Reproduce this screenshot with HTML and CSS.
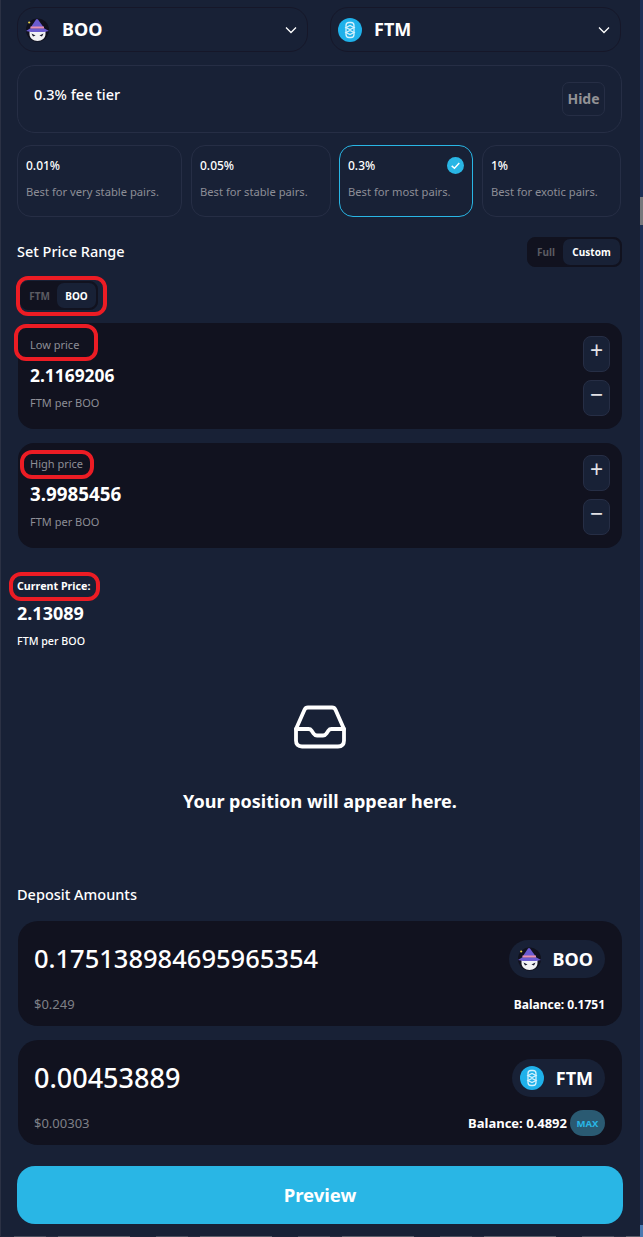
FILE: index.html
```html
<!DOCTYPE html>
<html lang="en">
<head>
<meta charset="utf-8">
<title>Add liquidity</title>
<link rel="stylesheet" href="styles.css">
</head>
<body>
<main class="page">
  <div class="pair">
    <button class="select select-a">
      <svg class="coin" viewBox="0 0 24 24"><use href="#boo"/></svg>
      <span class="select-name">BOO</span>
      <svg class="chev" viewBox="0 0 12 8"><path d="M1 1.500 6 6.500 11 1.500"/></svg>
    </button>
    <button class="select select-b">
      <svg class="coin" viewBox="0 0 24 24"><use href="#ftm"/></svg>
      <span class="select-name">FTM</span>
      <svg class="chev" viewBox="0 0 12 8"><path d="M1 1.500 6 6.500 11 1.500"/></svg>
    </button>
  </div>

  <section class="fee">
    <span class="fee-title">0.3% fee tier</span>
    <button class="hide">Hide</button>
  </section>

  <div class="tiers">
    <div class="tier t1"><b>0.01%</b><span>Best for very stable pairs.</span></div>
    <div class="tier t2"><b>0.05%</b><span>Best for stable pairs.</span></div>
    <div class="tier t3 on"><b>0.3%</b><span>Best for most pairs.</span>
      <svg class="tick" viewBox="0 0 18 18"><circle cx="9" cy="9" r="9"/><path d="M5 9.400 7.900 12 13 6.300"/></svg>
    </div>
    <div class="tier t4"><b>1%</b><span>Best for exotic pairs.</span></div>
  </div>

  <div class="range-head">
    <h2 class="head">Set Price Range</h2>
    <div class="seg seg-range"><span class="seg-off">Full</span><span class="seg-on">Custom</span></div>
  </div>

  <div class="seg seg-token mark mark-token"><span class="seg-off">FTM</span><span class="seg-on">BOO</span></div>

  <section class="price price-low">
    <div class="price-body">
      <span class="price-label mark mark-low">Low price</span>
      <span class="price-value">2.1169206</span>
      <span class="price-unit">FTM per BOO</span>
    </div>
    <div class="steps"><button class="step">+</button><button class="step">−</button></div>
  </section>

  <section class="price price-high">
    <div class="price-body">
      <span class="price-label mark mark-high">High price</span>
      <span class="price-value">3.9985456</span>
      <span class="price-unit">FTM per BOO</span>
    </div>
    <div class="steps"><button class="step">+</button><button class="step">−</button></div>
  </section>

  <div class="current">
    <span class="current-label mark mark-current">Current Price:</span>
    <span class="current-value">2.13089</span>
    <span class="current-unit">FTM per BOO</span>
  </div>

  <div class="empty">
    <svg class="tray" viewBox="0 0 52 44"><path d="M2 24 10.500 4.800Q11.500 2.500 14 2.500H38Q40.500 2.500 41.500 4.800L50 24V35.500Q50 41.500 44 41.500H8Q2 41.500 2 35.500Z"/><path d="M2 24H14.500Q16.500 24 17.500 25.500L19.500 28.500Q20.800 30.500 23 30.500H29Q31.200 30.500 32.500 28.500L34.500 25.500Q35.500 24 37.500 24H50"/></svg>
    <p class="empty-text">Your position will appear here.</p>
  </div>

  <h2 class="head deposit-head">Deposit Amounts</h2>

  <section class="amount">
    <div class="amount-row">
      <span class="amount-value">0.175138984695965354</span>
      <span class="token token-boo"><svg class="coin" viewBox="0 0 24 24"><use href="#boo"/></svg>BOO</span>
    </div>
    <div class="amount-foot">
      <span class="usd">$0.249</span>
      <span class="balance">Balance: 0.1751</span>
    </div>
  </section>

  <section class="amount amount-2">
    <div class="amount-row">
      <span class="amount-value">0.00453889</span>
      <span class="token"><svg class="coin" viewBox="0 0 24 24"><use href="#ftm"/></svg>FTM</span>
    </div>
    <div class="amount-foot">
      <span class="usd">$0.00303</span>
      <span class="balance">Balance: 0.4892<span class="max">MAX</span></span>
    </div>
  </section>

  <button class="preview">Preview</button>
</main>

<svg class="defs" width="0" height="0" aria-hidden="true">
  <defs>
    <symbol id="boo" viewBox="0 0 24 24">
      <circle cx="11.500" cy="12" r="11.500" fill="#10111d"/>
      <path d="M3.500 13H19.500V16C19.500 20 16 23 11.500 23S3.500 20 3.500 16Z" fill="#f1f1f4"/>
      <path d="M5.500 15.500 9.500 17.500 7 18.500ZM17.500 15.500 13.500 17.500 16 18.500Z" fill="#15162a"/>
      <path d="M4 10.500 10 1.500Q11 .5 12 1.500L18.500 10.500Z" fill="#6a5bd0"/>
      <path d="M0 13 4 10.500H18.500L23 13 18 14H5Z" fill="#6a5bd0"/>
      <rect x="4.500" y="8.500" width="13.500" height="2" fill="#e88fb0"/>
      <circle cx="3.200" cy="4.500" r="1.100" fill="#e8d24a"/>
    </symbol>
    <symbol id="ftm" viewBox="0 0 24 24">
      <circle cx="12" cy="12" r="12" fill="#1fb1ea"/>
      <g fill="none" stroke="#d5f2fd" stroke-width="1.300">
        <rect x="8" y="4.500" width="8" height="15" rx="3"/>
        <path d="M8 9.500 12 7.500 16 9.500 12 11.500ZM8 14.500 12 12.500 16 14.500 12 16.500Z"/>
      </g>
    </symbol>
  </defs>
</svg>
</body>
</html>
```
FILE: styles.css
```css
* { box-sizing: border-box; }
html, body { margin: 0; padding: 0; }
body {
  position: relative;
  background: #182136;
  color: #fff;
  font-family: "Noto Sans", "Open Sans", sans-serif;
  height: 1237px;
  overflow: hidden;
}
/* window edges captured in the screenshot: left hairline, bottom strip */
body::before {
  content: ""; position: absolute; left: 0; top: 0; bottom: 0; width: 1px;
  background: #2b3144;
}
body::after {
  content: ""; position: absolute; left: 0; right: 0; bottom: 0; height: 1px;
  background: repeating-linear-gradient(90deg, #20263a 0 14px, #4b4f5e 14px 46px, #2a2f42 46px 58px, #5c5f6b 58px 130px, #20263a 130px 142px);
}
html::after {
  content: ""; position: absolute; right: 0; top: 0; width: 3px; height: 1237px;
  background: linear-gradient(#1c2f55 0 197px, #77787c 197px 225px, #1c2f55 225px 1225px, #4a78b0 1225px);
}
button { font: inherit; color: inherit; background: none; border: 0; padding: 0; }
h2, p { margin: 0; }
.defs { position: absolute; }
.page { padding: 7px 21px 0 17px; display: flex; flex-direction: column; }

.pair { display: flex; gap: 22px; width: 605px; }
.select {
  height: 45px; width: 291px; display: flex; align-items: center;
  border: 1px solid #161729; border-radius: 18px;
  padding: 0 10px 0 7px;
}
.select-a { padding-left: 8px; }
.select .coin { width: 24px; height: 24px; flex: none; }
.select-name { margin-left: 12px; padding-bottom: 2px; font-size: 18px; font-weight: 700; flex: 1; text-align: left; line-height: 1; }
.chev { width: 12px; height: 8px; margin-top: 1px; fill: none; stroke: #fff; stroke-width: 1.300; }

.fee {
  margin-top: 13px; height: 68px; width: 605px;
  border: 1px solid #262e45; border-radius: 18px;
  padding: 16px 16px 0 16px;
  display: flex; justify-content: space-between; align-items: flex-start;
}
.fee-title { font-size: 14.500px; font-weight: 500; line-height: 24px; }
.hide {
  width: 43px; height: 34px; padding-bottom: 1px;
  border: 1px solid #262e45; border-radius: 7px;
  font-size: 14px; font-weight: 700; color: #929295;
}

.tiers { display: flex; gap: 9px; margin-top: 12px; width: 605px; }
.tier {
  position: relative; height: 72px; padding: 11px 8px 0 8px;
  border: 1px solid #262e45; border-radius: 14px;
  display: flex; flex-direction: column;
  flex: none;
}
.t1 { width: 165px; }
.t2 { width: 140px; margin-right: -1px; }
.t3 { width: 134px; }
.t4 { width: 139px; }
.tier.on { border-color: #29b6e5; }
.tier b { font-size: 12px; font-weight: 500; line-height: 18px; }
.tier span { margin-top: 9px; font-size: 11.200px; line-height: 16px; color: #8d8e96; white-space: nowrap; }
.tick { position: absolute; top: 11px; right: 8px; width: 17px; height: 17px; }
.tick circle { fill: #29b6e5; }
.tick path { fill: none; stroke: #fff; stroke-width: 1.500; }

.range-head { display: flex; justify-content: space-between; align-items: center; margin-top: 20px; width: 605px; }
.head { font-size: 14.500px; font-weight: 500; line-height: 20px; padding-bottom: 2px; }
.seg {
  display: inline-flex; height: 30px; padding: 1px;
  background: #11121f; border: 1px solid #11121f; border-radius: 8px;
  font-size: 10px; font-weight: 700;
}
.seg span { display: flex; align-items: center; justify-content: center; }
.seg-off { color: #5b5b62; }
.seg-on { background: #182136; border-radius: 7px; }
.seg-range { width: 95px; }
.seg-range .seg-off { width: 34px; }
.seg-range .seg-on { flex: 1; }
.seg-token { width: 78px; height: 29px; margin: 14px 0 0 3px; }
.seg-token .seg-off { width: 35px; }
.seg-token .seg-on { flex: 1; }

.mark { position: relative; }
.mark::after {
  content: ""; position: absolute;
  border: 4px solid #ec1c24; border-radius: 12px;
  pointer-events: none;
}
.mark-token::after { inset: -6px -10px -7px -5px; }
.mark-low::after { inset: -13px -19px -8px -16px; }
.mark-high::after { inset: -6px -11px -7px -10px; }
.mark-current::after { inset: -7px -10px -8px -8px; }

.price {
  margin: 13px 0 0 1px; width: 604px; height: 106px;
  background: #11121f; border-radius: 16px;
  padding: 13px 12px 0 12px;
  display: flex; justify-content: space-between; align-items: flex-start;
}
.price-high { margin-top: 14px; height: 105px; padding-top: 12px; }
.price-body { display: flex; flex-direction: column; align-items: flex-start; }
.price-label { margin-top: 1px; font-size: 11px; line-height: 16px; color: #8d8e96; }
.price-value { margin-top: 9px; font-size: 17.400px; font-weight: 700; line-height: 26px; }
.price-high .price-value { font-size: 18.800px; }
.price-unit { margin-top: 7px; font-size: 11px; line-height: 16px; color: #8d8e96; }
.steps { display: flex; flex-direction: column; gap: 8px; }
.step {
  width: 27px; height: 36px; background: #182136;
  border: 1px solid #262e45; border-radius: 8px;
  font-size: 23px; line-height: 1; color: #e2e2e6; padding-bottom: 7px;
}

.current { display: flex; flex-direction: column; align-items: flex-start; margin-top: 31px; }
.current-label { font-size: 10.700px; font-weight: 700; line-height: 14px; }
.current-value { margin-top: 8px; font-size: 18px; font-weight: 700; line-height: 24px; }
.current-unit { margin-top: 8px; font-size: 10.700px; font-weight: 500; line-height: 16px; }

.empty { display: flex; flex-direction: column; align-items: center; margin-top: 56px; width: 606px; }
.tray { width: 52px; height: 44px; fill: none; stroke: #fff; stroke-width: 3.800; stroke-linejoin: round; stroke-linecap: round; }
.empty-text { margin-top: 39px; font-size: 18px; font-weight: 700; line-height: 26px; }
.deposit-head { margin-top: 70px; margin-bottom: -1px; }

.amount {
  margin: 16px 0 0 1px; width: 604px; height: 105px;
  background: #11121f; border-radius: 20px;
  padding: 19px 17px 0 16px;
  display: flex; flex-direction: column;
}
.amount-2 { margin-top: 14px; }
.amount-row { display: flex; justify-content: space-between; align-items: center; height: 38px; }
.amount-value { font-size: 25.500px; font-weight: 500; padding-bottom: 2px; }
.amount-2 .amount-value { font-size: 27px; }
.token {
  display: flex; align-items: center; gap: 12px;
  height: 38px; padding: 0 12px 0 8px;
  background: #182136; border-radius: 19px;
  font-size: 18px; font-weight: 700;
}
.token-boo { padding-left: 9px; gap: 11px; }
.token .coin { width: 24px; height: 24px; }
.amount-foot { display: flex; justify-content: space-between; align-items: center; height: 26px; margin-top: 13px; }
.usd { font-size: 13px; color: #7f8087; }
.balance { display: flex; align-items: center; font-size: 12px; font-weight: 700; }
.amount-2 .balance { font-size: 13px; }
.max {
  margin-left: 3px; width: 35px; height: 26px; border-radius: 13px;
  background: #2a5a72; color: #29b6e5; font-size: 9.500px;
  display: flex; align-items: center; justify-content: center;
}
.preview {
  margin-top: 21px; width: 606px; height: 58px; padding-bottom: 2px;
  background: #29b6e5; border-radius: 18px;
  font-size: 18.500px; font-weight: 700;
}
```
